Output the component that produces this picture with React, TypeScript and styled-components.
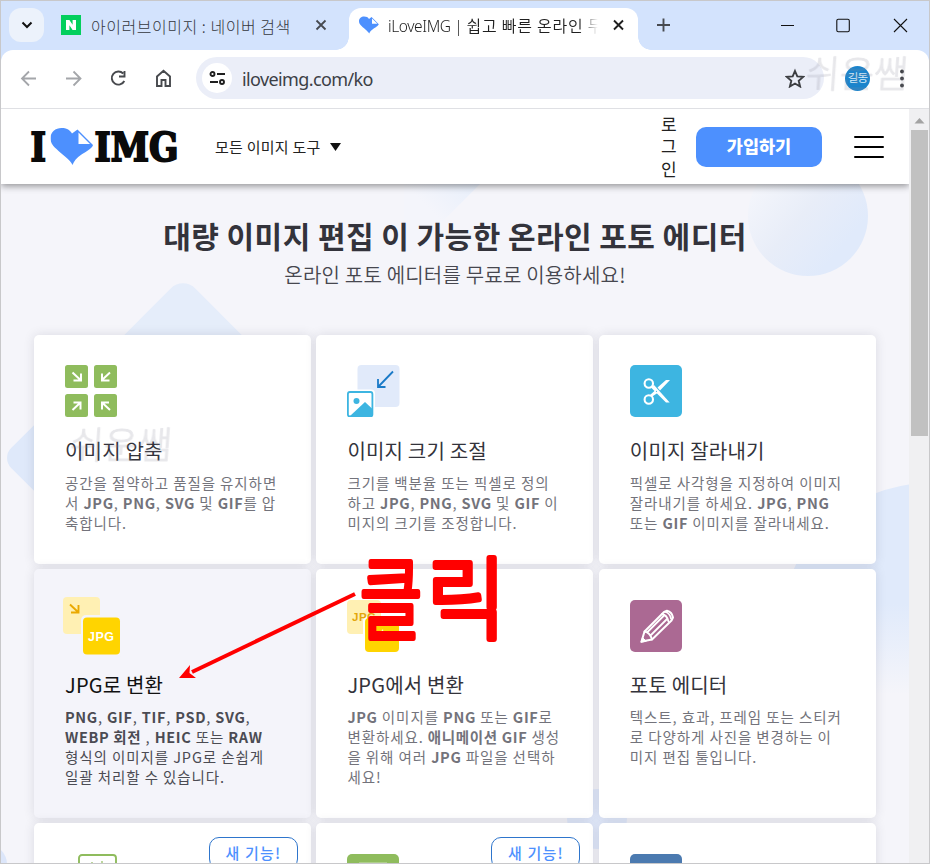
import React from "react";
import styled, { createGlobalStyle, css } from "styled-components";

const kr = '"Noto Sans CJK KR", "Noto Sans", sans-serif';

const Global = createGlobalStyle`
  * { box-sizing: border-box; }
  body { margin: 0; overflow: hidden; font-family: ${kr}; color: #33333b; }
  svg { display: block; flex: none; }
`;

const Window = styled.div`
  position: relative;
  width: 930px;
  height: 864px;
  border: 1px solid #c8c8ca;
  overflow: hidden;
  background: #d3e3fd;
`;

/* ---------- browser chrome ---------- */

const TabStrip = styled.div`
  height: 49px;
  display: flex;
  padding: 7px 0 0 8px;
`;

const TabSearch = styled.div`
  width: 35px;
  height: 34px;
  border-radius: 12px;
  background: #ecf2fb;
  display: grid;
  place-items: center;
`;

const IdleTab = styled.div`
  display: flex;
  align-items: center;
  width: 305px;
  height: 34px;
  padding-left: 17px;
`;

const Favicon = styled.div`
  width: 20px;
  height: 20px;
  background: #03cf5d;
  display: grid;
  place-items: center;
`;

const TabTitle = styled.div<{ $dark?: boolean; $w: number; $ls: number }>`
  width: ${(p) => p.$w}px;
  margin: 1px 0 0 10px;
  font-size: 16px;
  font-weight: ${(p) => (p.$dark ? 350 : 300)};
  line-height: 24px;
  letter-spacing: ${(p) => p.$ls}px;
  white-space: nowrap;
  overflow: hidden;
  color: ${(p) => (p.$dark ? "#1f1f1f" : "#33373d")};
  ${(p) =>
    p.$dark &&
    css`
      margin-left: 9px;
      mask-image: linear-gradient(90deg, #000 90%, transparent 99%);
    `}
`;

const Latin = styled.span`
  font-family: "Noto Sans", sans-serif;
  font-size: 15.5px;
  letter-spacing: -0.4px;
`;

const ActiveTab = styled.div`
  position: relative;
  display: flex;
  align-items: center;
  width: 289px;
  height: 42px;
  padding: 0 0 8px 10px;
  border-radius: 12px 12px 0 0;
  background: #fff;
  &::before,
  &::after {
    content: "";
    position: absolute;
    bottom: 0;
    width: 13px;
    height: 13px;
  }
  &::before {
    left: -13px;
    background: radial-gradient(circle at 0 0, transparent 12.5px, #fff 13px);
  }
  &::after {
    right: -13px;
    background: radial-gradient(circle at 100% 0, transparent 12.5px, #fff 13px);
  }
`;

const WindowButtons = styled.div`
  display: flex;
  align-items: center;
  height: 34px;
  padding-left: 18px;
`;

const Toolbar = styled.div`
  display: flex;
  align-items: center;
  height: 59px;
  padding: 0 0 2px 19px;
  border-bottom: 1px solid #dfe0e4;
  border-radius: 12px 12px 0 0;
  background: #fff;
`;

const NavIcons = styled.div`
  display: flex;
  gap: 25px;
`;

const AddressBar = styled.div`
  display: flex;
  align-items: center;
  width: 628px;
  height: 42px;
  margin-left: 21px;
  padding: 0 19px 0 6px;
  border-radius: 21px;
  background: #ebeef8;
`;

const SiteInfo = styled.div`
  width: 30px;
  height: 30px;
  border-radius: 50%;
  background: #fff;
  display: grid;
  place-items: center;
`;

const Url = styled.div`
  flex: 1;
  margin: 2px 0 0 10px;
  font: 400 18px/26px "Noto Sans", sans-serif;
  letter-spacing: -0.62px;
  color: #3c4046;
`;

const Avatar = styled.div`
  width: 25px;
  height: 25px;
  margin: 0 29px 0 21px;
  border-radius: 50%;
  background: #1b84cc;
  color: #d6ecfa;
  font-size: 11.5px;
  line-height: 23px;
  text-align: center;
  letter-spacing: -0.8px;
`;

/* ---------- page ---------- */

const Viewport = styled.div`
  display: flex;
  height: 754px;
`;

const Page = styled.div`
  position: relative;
  width: 908px;
  height: 100%;
  overflow: hidden;
  background: #f5f5fa;
`;

const Backdrop = styled.svg`
  position: absolute;
  left: 0;
  top: 0;
`;

const Header = styled.header`
  position: relative;
  display: flex;
  align-items: center;
  height: 75px;
  padding-left: 29px;
  background: #fff;
  box-shadow: 0 2px 7px rgba(0, 0, 0, 0.42);
`;

const ToolsMenu = styled.nav`
  display: flex;
  align-items: center;
  gap: 9px;
  width: 446px;
  margin-left: 33px;
  font-size: 15px;
  letter-spacing: 0.25px;
  color: #222;
  line-height: 24px;
`;

const Login = styled.div`
  width: 17px;
  margin-right: 18px;
  font-size: 17px;
  line-height: 22.5px;
  color: #222;
  word-break: break-all;
`;

const SignUp = styled.div`
  width: 126px;
  height: 40px;
  margin-right: 32px;
  border-radius: 10px;
  background: #4d90fe;
  color: #fff;
  font-size: 17.5px;
  font-weight: 900;
  line-height: 38px;
  text-align: center;
`;

const Burger = styled.div`
  display: flex;
  flex-direction: column;
  gap: 8px;
  width: 30px;
  span {
    height: 2px;
    border-radius: 1px;
    background: #000;
  }
`;

const Hero = styled.section`
  position: relative;
  height: 150.5px;
  padding-top: 29px;
  text-align: center;
`;

const HeroTitle = styled.h1`
  margin: 0 0 2px;
  font-size: 30px;
  line-height: 44px;
  font-weight: 700;
  letter-spacing: 0.44px;
  color: #33333b;
`;

const HeroText = styled.p`
  margin: 0;
  font-size: 20px;
  line-height: 32px;
  font-weight: 350;
  letter-spacing: 0.2px;
  color: #47474f;
`;

const Grid = styled.main`
  position: relative;
  display: grid;
  grid-template-columns: repeat(3, 277px);
  grid-template-rows: 229.2px 249.2px 249px;
  gap: 5.3px 5.4px;
  padding-left: 33px;
`;

const Card = styled.article<{ $active?: boolean }>`
  display: flex;
  flex-direction: column;
  padding: 30.5px 0 0 31px;
  border-radius: 5px;
  background: ${(p) => (p.$active ? "#f4f4fa" : "#fff")};
  box-shadow: 0 0 11px rgba(50, 50, 70, 0.13);
`;

const IconSlot = styled.div<{ $low?: boolean }>`
  width: 52px;
  height: 52px;
  padding-top: ${(p) => (p.$low ? 0.7 : 0)}px;
`;

const CardTitle = styled.h3<{ $active?: boolean }>`
  margin: 18.7px 0 0;
  font-size: 20px;
  line-height: 30px;
  font-weight: 400;
  letter-spacing: 0.2px;
  color: ${(p) => (p.$active ? "#111" : "#33333b")};
`;

const CardText = styled.p<{ $active?: boolean }>`
  margin: 7px 0 0;
  font-size: 14.5px;
  line-height: 20px;
  letter-spacing: 0.92px;
  white-space: pre;
  color: ${(p) => (p.$active ? "#4b4b53" : "#73737b")};
  b {
    font-weight: 700;
    letter-spacing: 0.66px;
  }
`;

const IconRow = styled.div`
  display: flex;
  justify-content: space-between;
  padding-right: 13px;
`;

const NewBadge = styled.div`
  width: 89px;
  height: 32px;
  margin-top: -17px;
  border: 1px solid #2e75cc;
  border-radius: 10px;
  color: #4d90fe;
  font-size: 15px;
  font-weight: 500;
  line-height: 29px;
  letter-spacing: 1.2px;
  text-align: center;
`;

const Scrollbar = styled.div`
  width: 20px;
  height: 100%;
  padding: 9px 1px 0 2px;
  background: #f0f0f2;
`;

const Thumb = styled.div`
  width: 17px;
  height: 306px;
  margin-top: 6px;
  background: #c1c1c1;
`;

const Overlay = styled.svg`
  position: absolute;
  left: -1px;
  top: -1px;
  pointer-events: none;
`;

/* ---------- icons ---------- */

const CloseIcon = ({ color }: { color: string }) => (
  <svg width="12" height="12" viewBox="0 0 12 12">
    <path d="M1.5 1.5l9 9M10.5 1.5l-9 9" stroke={color} strokeWidth="1.8" />
  </svg>
);

const Heart = ({ w, h }: { w: number; h: number }) => (
  <svg width={w} height={h} viewBox="0 0 43 37">
    <path
      d="M22 37C20 32 11 26 6 21C1 17 0 13 0 10C0 4 5 0 11 0C16 0 19 1.5 21.5 5.5L27 1.5L42.5 17C42 20 35 24 31 26.5C26 30 23.5 33 22 37Z"
      fill="#4d90fe"
    />
    <path d="M28 4.5V16H39.5Z" fill="#fff" />
  </svg>
);

const Logo = () => (
  <svg width="152" height="60" viewBox="0 -10 152 60">
    <g fontFamily="DejaVu Serif" fontWeight="700" fontSize="38.5" fill="#0a0a0a" stroke="#0a0a0a" strokeWidth="1.9">
      <text x="0.5" y="33.5" textLength="15.5" lengthAdjust="spacingAndGlyphs">I</text>
      <text x="64.5" y="33.5" textLength="84" lengthAdjust="spacingAndGlyphs">IMG</text>
    </g>
    <g transform="translate(20.5 1)">
      <Heart w={43} h={37} />
    </g>
  </svg>
);

const CompressIcon = () => (
  <svg width="52" height="52" viewBox="0 0 52 52">
    <g fill="#8fbc5d">
      <rect width="23" height="23" rx="2.5" />
      <rect x="29" width="23" height="23" rx="2.5" />
      <rect y="29" width="23" height="23" rx="2.5" />
      <rect x="29" y="29" width="23" height="23" rx="2.5" />
    </g>
    <g fill="none" stroke="#fff" strokeWidth="2">
      <path d="M7.5 7.5l8 7.5M16 8.5v7H8.5" />
      <path d="M45 7.5l-8 7.5M37 8.5v7h7.5" />
      <path d="M7.5 45l8-7.5M8.5 37.5H15.5v7" />
      <path d="M45 45l-8-7.5M44 37.5h-7v7" />
    </g>
  </svg>
);

const ResizeIcon = () => (
  <svg width="53" height="52" viewBox="0 0 53 52">
    <rect x="10.5" width="42" height="42" rx="4" fill="#e1eafa" />
    <path d="M46 6.5L31.5 21.5M31 14v8h7.5" fill="none" stroke="#1a7ac7" strokeWidth="1.8" />
    <rect x="-2" y="24.5" width="30" height="30" rx="4" fill="#fff" />
    <rect x="0.9" y="27" width="24.5" height="24.5" rx="2" fill="#fff" stroke="#3db5e1" strokeWidth="1.8" />
    <circle cx="9.5" cy="36" r="3" fill="#3db5e1" />
    <path d="M3 51L18 37L25.5 44V51Z" fill="#3db5e1" />
  </svg>
);

const CropIcon = () => (
  <svg width="52" height="52" viewBox="0 0 52 52">
    <rect width="52" height="52" rx="5" fill="#3db5e1" />
    <g fill="none" stroke="#fff" strokeWidth="2.1">
      <circle cx="18.8" cy="18.5" r="4.2" />
      <circle cx="18.8" cy="34.5" r="4.2" />
    </g>
    <path d="M21 22.5L24 20L39.7 37.5H36Z" fill="#fff" />
    <path d="M21.5 32L20 30L25 25.5L27.5 28Z M27.5 22.5L36 15H40L30 25.5Z" fill="#fff" />
    <circle cx="26.5" cy="26.3" r=".6" fill="#3db5e1" />
  </svg>
);

const ToJpgIcon = () => (
  <svg width="60" height="60" viewBox="0 0 60 60">
    <rect width="37" height="37" rx="4" fill="#fff0b3" />
    <path d="M7 7.5l8 7.5M15.5 8v7.5H8" fill="none" stroke="#eaa900" strokeWidth="1.9" />
    <rect x="18" y="18" width="42" height="42" rx="5" fill="#f4f4fa" />
    <rect x="20" y="20.5" width="37" height="37" rx="4" fill="#ffd400" />
    <text x="25" y="43.5" textLength="26" fontFamily="Liberation Sans" fontWeight="700" fontSize="12.5" fill="#fff">
      JPG
    </text>
  </svg>
);

const Shifted = styled.div`
  margin: -2.5px 0 0 -2.5px;
`;

const FromJpgIcon = () => (
  <svg width="52" height="52" viewBox="0 0 52 52">
    <rect width="34" height="34" rx="4" fill="#fff0b3" />
    <rect x="16" y="16" width="40" height="40" rx="5" fill="#fff" />
    <rect x="18" y="18" width="34" height="34" rx="4" fill="#ffd400" />
    <text x="5" y="21" textLength="24" fontFamily="Liberation Sans" fontWeight="700" fontSize="11.5" fill="#e3a60c">
      JPG
    </text>
    <path d="M30 36L36 29L37 36Z" fill="#fff" opacity=".8" />
  </svg>
);

const EditorIcon = () => (
  <svg width="52" height="52" viewBox="0 0 52 52">
    <rect width="52" height="52" rx="5" fill="#ab6993" />
    <g fill="none" strokeLinecap="round" strokeLinejoin="round" stroke="#fff" strokeWidth="2">
      <path d="M11.5 41.5L14.5 31.5L34 12L37 10.8Q42 12 43 17.5L41.5 20.5L22 39.5Z" />
      <path
        d="M14.5 31.5Q20 32.5 22 39.5M17.5 32L34.5 15M21 35L37.5 18.5M32 14Q37 15 38.5 21.5M35.5 12Q40 13.5 41 18.5"
        strokeWidth="1.8"
      />
      <path d="M11 42L12.5 37.5L16 41Z" fill="#fff" strokeWidth="1" />
    </g>
  </svg>
);

const NextRowIcon = ({ kind }: { kind: "outline" | "green" | "blue" }) => (
  <svg width="52" height="52" viewBox="0 0 52 52">
    {kind === "outline" ? (
      <>
        <rect x="14" y="1" width="37" height="40" rx="3" fill="#fff" stroke="#8fbc5d" strokeWidth="1.9" />
        <path d="M27 8v5M37 7v6M34 10h6" stroke="#8fbc5d" strokeWidth="1.2" />
      </>
    ) : (
      <rect width="52" height="52" rx="5" fill={kind === "green" ? "#8fbc5d" : "#4b7ab0"} />
    )}
    {kind === "green" && <path d="M12 9H40" stroke="#b8d59b" strokeWidth="1.5" />}
  </svg>
);

/* ---------- app ---------- */

const Chrome = () => (
  <>
    <TabStrip>
      <TabSearch>
        <svg width="12" height="8" viewBox="0 0 12 8">
          <path d="M1.5 1.5L6 6L10.5 1.5" fill="none" stroke="#111" strokeWidth="2" />
        </svg>
      </TabSearch>
      <IdleTab>
        <Favicon>
          <svg width="10" height="10" viewBox="0 0 10 10">
            <path d="M0 0H3.4L6.6 4.8V0H10V10H6.6L3.4 5.2V10H0Z" fill="#fff" />
          </svg>
        </Favicon>
        <TabTitle $w={224} $ls={0.53}>아이러브이미지 : 네이버 검색</TabTitle>
        <CloseIcon color="#474a50" />
      </IdleTab>
      <ActiveTab>
        <Heart w={20} h={18} />
        <TabTitle $dark $w={212} $ls={0.75}>
          <Latin>iLoveIMG |</Latin> 쉽고 빠른 온라인 무료
        </TabTitle>
        <svg width="26" height="12" viewBox="0 0 26 12">
          <path d="M14 1.5l9 9M23 1.5l-9 9" stroke="#1f1f1f" strokeWidth="1.9" />
        </svg>
      </ActiveTab>
      <WindowButtons>
        <svg width="256" height="16" viewBox="0 0 256 16">
          <path d="M7.5 1.5V14.5M1 8H14" stroke="#474a50" strokeWidth="1.9" />
          <path d="M125 8.5H138" stroke="#111" />
          <rect x="180.8" y="2.3" width="12.5" height="12.5" rx="1.5" fill="none" stroke="#111" strokeWidth="1.1" />
          <path d="M238 2L251 15M251 2L238 15" stroke="#111" strokeWidth="1.1" />
        </svg>
      </WindowButtons>
    </TabStrip>
    <Toolbar>
      <NavIcons>
        <svg width="20" height="20" viewBox="0 0 20 20">
          <path d="M16 10.5H2.5M9 3.5L2 10.5L9 17.5" fill="none" stroke="#a4a6aa" strokeWidth="1.8" />
        </svg>
        <svg width="20" height="20" viewBox="0 0 20 20">
          <path d="M1 10.5H15M8.5 3.5L15.5 10.5L8.5 17.5" fill="none" stroke="#a4a6aa" strokeWidth="1.8" />
        </svg>
        <svg width="20" height="20" viewBox="0 0 20 20">
          <path d="M13.2 5.5A6.6 6.6 0 1 0 14.3 13M14.5 3V8.5H9" fill="none" stroke="#47494d" strokeWidth="1.9" />
        </svg>
        <svg width="20" height="20" viewBox="0 0 20 20">
          <path d="M2 8.5L8.5 2.8L15 8.5V18H10.5V12H6.5V18H2Z" fill="none" stroke="#47494d" strokeWidth="1.9" />
        </svg>
      </NavIcons>
      <AddressBar>
        <SiteInfo>
          <svg width="17" height="14" viewBox="0 0 17 14">
            <g fill="none" stroke="#1f1f1f" strokeWidth="1.9">
              <circle cx="3.5" cy="3" r="2" />
              <circle cx="13" cy="11" r="2" />
              <path d="M8 3H16M1 11H9" />
            </g>
          </svg>
        </SiteInfo>
        <Url>iloveimg.com/ko</Url>
        <svg width="20" height="20" viewBox="0 0 20 20">
          <path
            d="M10 3L12.3 8.4L18.2 8.9L13.7 12.8L15.1 18.5L10 15.5L4.9 18.5L6.3 12.8L1.8 8.9L7.7 8.4Z"
            fill="none"
            stroke="#3c3e42"
            strokeWidth="1.9"
          />
        </svg>
      </AddressBar>
      <Avatar>길동</Avatar>
      <svg width="6" height="20" viewBox="0 0 6 20" fill="#3c3e42">
        <circle cx="3" cy="3.5" r="1.9" />
        <circle cx="3" cy="10.5" r="1.9" />
        <circle cx="3" cy="17.5" r="1.9" />
      </svg>
    </Toolbar>
  </>
);

const PageBackdrop = () => (
  <Backdrop width="908" height="754" viewBox="1 109 908 754">
    <defs>
      <linearGradient id="disc" x1=".1" y1=".25" x2=".75" y2=".8">
        <stop offset="0" stopColor="#f3f5fb" />
        <stop offset=".5" stopColor="#e8edf8" />
        <stop offset="1" stopColor="#e0eafb" />
      </linearGradient>
      <linearGradient id="side" x1="0" y1="0" x2="0" y2="1">
        <stop offset="0" stopColor="#e0eafb" />
        <stop offset=".4" stopColor="#e0eafb" />
        <stop offset=".7" stopColor="#f5f5fa" />
      </linearGradient>
      <linearGradient id="wedge" x1="1" y1="0" x2="0" y2="1">
        <stop offset="0" stopColor="#e4edfb" />
        <stop offset=".55" stopColor="#f4f5fb" />
      </linearGradient>
    </defs>
    <path d="M404 260V175H489Z" fill="url(#wedge)" />
    <circle cx="808" cy="216" r="60" fill="url(#disc)" />
    <rect x="133" y="297" width="100" height="100" rx="17" transform="rotate(45 183 347)" fill="#e5edfa" />
    <rect x="17" y="420" width="76" height="76" rx="14" transform="rotate(45 55 458)" fill="#dfe9fa" />
    <circle cx="930" cy="634" r="151" fill="url(#side)" />
    <circle cx="597" cy="819" r="30" fill="#e2eafb" />
    <circle cx="-12" cy="864" r="19" fill="#dce6fa" />
  </Backdrop>
);

const Tool = ({
  icon,
  title,
  active,
  low,
  children,
}: {
  icon: React.ReactNode;
  title: string;
  active?: boolean;
  low?: boolean;
  children: React.ReactNode;
}) => (
  <Card $active={active}>
    <IconSlot $low={low}>{icon}</IconSlot>
    <CardTitle $active={active}>{title}</CardTitle>
    <CardText $active={active}>{children}</CardText>
  </Card>
);

export default function App() {
  return (
    <Window>
      <Global />
      <Chrome />
      <Viewport>
        <Page>
          <PageBackdrop />
          <Header>
            <Logo />
            <ToolsMenu>
              모든 이미지 도구
              <svg width="11" height="8" viewBox="0 0 11 8">
                <path d="M0 0H11L5.5 8Z" fill="#111" />
              </svg>
            </ToolsMenu>
            <Login>로그인</Login>
            <SignUp>가입하기</SignUp>
            <Burger>
              <span />
              <span />
              <span />
            </Burger>
          </Header>
          <Hero>
            <HeroTitle>대량 이미지 편집 이 가능한 온라인 포토 에디터</HeroTitle>
            <HeroText>온라인 포토 에디터를 무료로 이용하세요!</HeroText>
          </Hero>
          <Grid>
            <Tool icon={<CompressIcon />} title="이미지 압축">
              공간을 절약하고 품질을 유지하면{"\n"}서 <b>JPG</b>, <b>PNG</b>, <b>SVG</b> 및 <b>GIF</b>를 압{"\n"}축합니다.
            </Tool>
            <Tool icon={<ResizeIcon />} title="이미지 크기 조절">
              크기를 백분율 또는 픽셀로 정의{"\n"}하고 <b>JPG</b>, <b>PNG</b>, <b>SVG</b> 및 <b>GIF</b> 이{"\n"}미지의 크기를 조정합니다.
            </Tool>
            <Tool icon={<CropIcon />} title="이미지 잘라내기">
              픽셀로 사각형을 지정하여 이미지{"\n"}잘라내기를 하세요. <b>JPG</b>, <b>PNG</b>{"\n"}또는 <b>GIF</b> 이미지를 잘라내세요.
            </Tool>
            <Tool active icon={<Shifted><ToJpgIcon /></Shifted>} title="JPG로 변환">
              <b>PNG</b>, <b>GIF</b>, <b>TIF</b>, <b>PSD</b>, <b>SVG</b>,{"\n"}
              <b>WEBP 회전</b> , <b>HEIC</b> 또는 <b>RAW</b>{"\n"}형식의 이미지를 JPG로 손쉽게{"\n"}일괄 처리할 수 있습니다.
            </Tool>
            <Tool low icon={<FromJpgIcon />} title="JPG에서 변환">
              <b>JPG</b> 이미지를 <b>PNG</b> 또는 <b>GIF</b>로{"\n"}변환하세요. <b>애니메이션 GIF</b> 생성{"\n"}을 위해 여러 <b>JPG</b> 파일을 선택하{"\n"}세요!
            </Tool>
            <Tool low icon={<EditorIcon />} title="포토 에디터">
              텍스트, 효과, 프레임 또는 스티커{"\n"}로 다양하게 사진을 변경하는 이{"\n"}미지 편집 툴입니다.
            </Tool>
            <Card>
              <IconRow>
                <NextRowIcon kind="outline" />
                <NewBadge>새 기능!</NewBadge>
              </IconRow>
            </Card>
            <Card>
              <IconRow>
                <NextRowIcon kind="green" />
                <NewBadge>새 기능!</NewBadge>
              </IconRow>
            </Card>
            <Card>
              <NextRowIcon kind="blue" />
            </Card>
          </Grid>
        </Page>
        <Scrollbar>
          <svg width="17" height="6" viewBox="0 0 17 6">
            <path d="M3.5 5.5L8.5 0L13.5 5.5Z" fill="#a3a3a3" />
          </svg>
          <Thumb />
        </Scrollbar>
      </Viewport>
      <Overlay width="930" height="864" viewBox="0 0 930 864">
        <g
          fontFamily="Noto Sans CJK KR"
          fontWeight="300"
          fontSize="37"
          fill="#8a8a9a"
          opacity=".2"
          stroke="#8a8a9a"
          strokeLinejoin="round"
        >
          <text transform="translate(805 88) skewX(-4)" textLength="102">쉬운쌤</text>
          <text transform="translate(69 459) skewX(-4)" textLength="102">쉬운쌤</text>
        </g>
        <path d="M355 594L192 672" stroke="#f00" strokeWidth="4" />
        <path d="M179 678L190 665L189.5 673L196 678Z" fill="#f00" />
        <g
          fontFamily="Noto Sans CJK KR"
          fontWeight="300"
          fontSize="90"
          fill="#f00"
          stroke="#f00"
          strokeWidth="6"
          strokeLinejoin="round"
        >
          <text x="360" y="632" textLength="62" lengthAdjust="spacingAndGlyphs">클</text>
          <text x="427" y="632" textLength="79" lengthAdjust="spacingAndGlyphs">릭</text>
        </g>
      </Overlay>
    </Window>
  );
}
